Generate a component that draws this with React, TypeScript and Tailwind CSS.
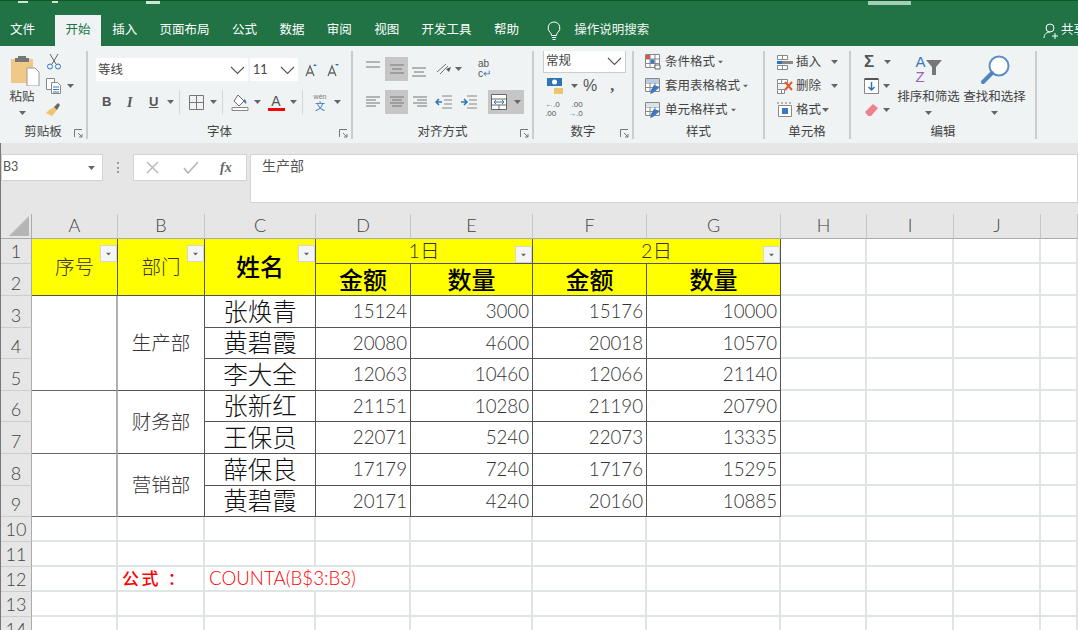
import React from 'react'

const Caret = ({ className = '' }: { className?: string }) => (
  <svg width="7" height="4" viewBox="0 0 7 4" className={`shrink-0 ${className}`}>
    <path d="M0 0h7L3.5 4z" fill="#666" />
  </svg>
)

const Chevron = () => (
  <svg width="15" height="9" viewBox="0 0 15 9">
    <path d="M1 1l6.5 6.5L14 1" fill="none" stroke="#555" strokeWidth="1.1" />
  </svg>
)

const Launcher = () => (
  <svg width="9" height="9" viewBox="0 0 9 9" className="absolute bottom-[1px] right-[3px]">
    <path d="M.5 8V.5H8M4 4l4 4M8 5v3H5" fill="none" stroke="#777" />
  </svg>
)

const Sep = () => <div className="mx-[5px] h-[24px] w-px bg-[#d3d6d6]" />

const Group = ({
  className,
  label,
  launcher,
  children,
}: {
  className: string
  label: string
  launcher?: boolean
  children: React.ReactNode
}) => (
  <div className={`relative flex h-[88px] shrink-0 flex-col border-r-2 border-[#c9cdcd] ${className}`}>
    <div className="h-[76px] overflow-hidden">{children}</div>
    <div className="text-center text-[12.5px] leading-[14px] text-[#444]">{label}</div>
    {launcher && <Launcher />}
  </div>
)

const AlignLines = ({ kind, active }: { kind: string; active?: boolean }) => {
  const lines: Record<string, string> = {
    top: 'M1 2h14M1 7h14',
    mid: 'M2 5h14M4 9h10M2 13h14',
    bottom: 'M1 8h14M3 12h10M1 16h14',
    left: 'M1 4h14M1 7h10M1 10h14M1 13h10',
    center: 'M2 4h14M4 7h10M2 10h14M4 13h10',
    right: 'M2 4h14M6 7h10M2 10h14M6 13h10',
  }
  return (
    <div className={`flex h-[24px] w-[23px] items-center justify-center ${active ? 'bg-[#c6c6c6]' : ''}`}>
      <svg width="18" height="18" viewBox="0 0 18 18">
        <path d={lines[kind]} stroke="#777" fill="none" />
      </svg>
    </div>
  )
}

const StyleIcon = ({ kind }: { kind: number }) => (
  <svg width="16" height="16" viewBox="0 0 16 16" className="shrink-0">
    <path d="M.5.5h14v13H.5zM.5 5h14M.5 9.500h14M5 .5v13M10 .5v13" fill="#fff" stroke="#888" />
    {kind === 0 && <path d="M1 1h4v4H1z" fill="#d9534f" />}
    {kind === 0 && <path d="M5.500 5.500h4v4h-4z" fill="#3a78c2" />}
    {kind === 0 && <path d="M10 11h5v4h-5z" fill="#fff" stroke="#666" />}
    {kind > 0 && <path d="M1 1h13v4H1z" fill={kind === 1 ? '#b8cde6' : '#dbe3ee'} />}
    {kind > 0 && <path d="M9 7l6 2-7 6-3 1 1-4z" fill="#3a78c2" />}
  </svg>
)

const CellIcon = ({ kind }: { kind: number }) => (
  <svg width="18" height="17" viewBox="0 0 18 17" className="shrink-0">
    {kind === 0 && (
      <>
        <path d="M1.500 1.500h10v4h-10zM1.500 11.500h10v4h-10zM6.500 1.500v4M6.500 11.500v4" fill="#fff" stroke="#888" />
        <path d="M2 8.500h15" stroke="#888" strokeWidth="3" />
        <path d="M1 8.500h5" stroke="#2f75b5" strokeWidth="3" />
      </>
    )}
    {kind === 1 && (
      <>
        <path d="M1.500 1.500h10v4h-10zM1.500 11.500h7v4h-7zM5.500 1.500v4M5.500 11.500v4M1.500 6v5" fill="#fff" stroke="#888" />
        <path d="M9 4l7 8M16 4l-7 8" stroke="#e0592a" strokeWidth="2" />
      </>
    )}
    {kind === 2 && (
      <>
        <path d="M2.500 3.500h13v11h-13z" fill="#fff" stroke="#888" />
        <path d="M1 1h16" stroke="#777" strokeDasharray="2 2" />
        <path d="M6 6h6v6H6z" fill="#3a78c2" />
      </>
    )}
  </svg>
)

const tabs = ['文件', '开始', '插入', '页面布局', '公式', '数据', '审阅', '视图', '开发工具', '帮助']

const TitleBar = () => (
  <div className="flex h-[46px] flex-col border-t border-[#0b5a23] bg-[#217346]">
    <div className="flex h-[4px] items-start">
      <div className="ml-[18px] h-[2px] w-[10px] bg-[#cfe3d8]" />
      <div className="ml-[24px] h-[2px] w-[6px] bg-[#cfe3d8]" />
      <div className="ml-[88px] h-[3px] w-[14px] bg-[#cfe3d8]" />
      <div className="ml-[708px] h-[4px] w-[43px] bg-[#a3cdb7]" />
    </div>
    <div className="flex h-[41px] items-end text-[12.5px] text-white">
      {tabs.map((t, i) => (
        <div
          key={t}
          className={
            i === 0
              ? 'flex h-[31px] items-center pl-[10px] pr-[20px]'
              : i === 1
                ? 'flex h-[31px] items-center bg-[#eff3f3] px-[10.500px] text-[#217346]'
                : 'flex h-[31px] items-center px-[11.200px]'
          }
        >
          {t}
        </div>
      ))}
      <div className="flex h-[31px] items-center pl-[16px]">
        <svg width="16" height="20" viewBox="0 0 16 20">
          <path d="M8 1a6 6 0 0 0-3.500 10.800c.8.700.9 1.500 1 2.700h5c.1-1.200.2-2 1-2.700A6 6 0 0 0 8 1zM5.800 16.500h4.400M6.500 18.500h3" fill="none" stroke="#fff" />
        </svg>
        <span className="ml-[12px] text-[#f0f5f2]">操作说明搜索</span>
      </div>
      <div className="ml-auto flex h-[31px] w-[36px] items-center overflow-hidden">
        <svg width="18" height="18" viewBox="0 0 18 18" className="shrink-0">
          <path d="M8 2a4 4 0 0 1 0 8 4 4 0 0 1 0-8zM2 16c0-4 3-6 6-6M13 11v6M10 14h6" fill="none" stroke="#fff" />
        </svg>
        <span className="ml-[1px] shrink-0">共享</span>
      </div>
    </div>
  </div>
)

const Clipboard = () => (
  <Group className="w-[88px]" label="剪贴板" launcher>
    <div className="flex">
      <div className="ml-[9px] flex w-[26px] flex-col items-center">
        <svg width="30" height="31" viewBox="0 0 30 31" className="ml-[6px] mt-[4px] shrink-0">
          <path d="M1 4h22v24H1z" fill="#f0c987" />
          <path d="M8 1h8v2h3v4H5V3h3z" fill="#777" />
          <path d="M17 13h8l4 4v14H17z" fill="#fff" stroke="#999" />
        </svg>
        <div className="mt-[3px] w-[30px] text-center text-[12.500px] leading-[16px] text-[#444]">粘贴</div>
        <Caret className="mt-[6px]" />
      </div>
      <div className="ml-[9px] flex flex-col">
        <svg width="16" height="17" viewBox="0 0 16 17" className="ml-[2px] mt-[2px]">
          <path d="M4 1l6 10M12 1L6 11" stroke="#666" fill="none" />
          <circle cx="4" cy="13.500" r="2.500" fill="none" stroke="#2f75b5" />
          <circle cx="12" cy="13.500" r="2.500" fill="none" stroke="#2f75b5" />
        </svg>
        <div className="mt-[7px] flex items-center">
          <svg width="17" height="17" viewBox="0 0 17 17" className="ml-[1px]">
            <path d="M1.500 1.500h8v11h-8z" fill="#fff" stroke="#888" />
            <path d="M6.500 5.500h6l3 3v8h-9z" fill="#fff" stroke="#888" />
            <path d="M8 10h6M8 12.500h6M8 15h6" stroke="#3a78c2" />
          </svg>
          <Caret className="ml-[5px]" />
        </div>
        <svg width="16" height="14" viewBox="0 0 16 14" className="ml-[1px] mt-[8px]">
          <path d="M9 5l3 3-5 6-6-3 3-3z" fill="#edc46f" />
          <path d="M9 5l4-4 2 2-3 5z" fill="#666" />
        </svg>
      </div>
    </div>
  </Group>
)

const FontGroup = () => (
  <Group className="w-[265px]" label="字体" launcher>
    <div className="flex items-center pl-[8px] pt-[7px]">
      <div className="flex h-[23px] w-[152px] items-center justify-between bg-white pl-[2px] pr-[3px] pt-[2px] text-[12.500px] text-[#444]">
        等线
        <Chevron />
      </div>
      <div className="ml-[2px] flex h-[23px] w-[48px] items-center justify-between bg-white pl-[3px] pr-[3px] pt-[1px] text-[12.500px] text-[#444]">
        11
        <Chevron />
      </div>
      <svg width="14" height="14" viewBox="0 0 14 14" className="ml-[6px]">
        <path d="M2 13L6 3l4 10M3.500 10h5" stroke="#666" strokeWidth="1.300" fill="none" />
        <path d="M9 3l2-2 2 2z" fill="#2f75b5" />
      </svg>
      <svg width="14" height="14" viewBox="0 0 14 14" className="ml-[8px]">
        <path d="M2 13L6 3l4 10M3.500 10h5" stroke="#666" strokeWidth="1.300" fill="none" />
        <path d="M9 1l2 2 2-2z" fill="#2f75b5" />
      </svg>
    </div>
    <div className="mt-[9px] flex h-[24px] items-center pl-[14px] text-[#555]">
      <span className="w-[25px] font-['Liberation_Sans'] text-[13px] font-bold">B</span>
      <span className="w-[22px] font-['Liberation_Serif'] text-[14px] font-bold italic">I</span>
      <span className="w-[18px] font-['Liberation_Sans'] text-[13px] font-bold underline">U</span>
      <Caret />
      <Sep />
      <svg width="15" height="15" viewBox="0 0 15 15" className="ml-[4px]">
        <path d="M.5.500h14v14H.5zM7.500.5v14M.5 7.500h14" fill="none" stroke="#777" />
      </svg>
      <Caret className="ml-[6px]" />
      <Sep />
      <svg width="18" height="18" viewBox="0 0 18 18" className="ml-[3px]">
        <path d="M7 2l6 6-5 5-5-5z" fill="#fff" stroke="#666" />
        <path d="M13 6c2 1 3 3 2 5l-2-2z" fill="#3a78c2" />
        <path d="M1 14.500h16v3H1z" fill="#fff" stroke="#888" />
      </svg>
      <Caret className="ml-[5px]" />
      <div className="ml-[6px] flex w-[18px] flex-col items-center">
        <span className="font-['Liberation_Sans'] text-[14px] leading-[14px]">A</span>
        <div className="h-[3px] w-[17px] bg-[#f00]" />
      </div>
      <Caret className="ml-[5px]" />
      <Sep />
      <div className="ml-[3px] flex w-[18px] flex-col items-center text-[#3a78c2]">
        <span className="font-['Liberation_Sans'] text-[7px] leading-[8px] text-[#777]">wén</span>
        <span className="text-[10px] leading-[11px]">文</span>
      </div>
      <Caret className="ml-[5px]" />
    </div>
  </Group>
)

const AlignGroup = () => (
  <Group className="w-[181px]" label="对齐方式" launcher>
    <div className="flex pl-[9px] pt-[6px]">
      <AlignLines kind="top" />
      <AlignLines kind="mid" active />
      <AlignLines kind="bottom" />
      <svg width="17" height="15" viewBox="0 0 17 15" className="ml-[4px] mt-[4px]">
        <path d="M2 11l9-8M5 13l8-8" stroke="#777" fill="none" />
        <path d="M11 8l5-2-2 5z" fill="#555" />
      </svg>
      <Caret className="ml-[3px] mt-[10px]" />
      <div className="ml-[16px] flex w-[20px] flex-col font-['Liberation_Sans'] text-[10px] leading-[10px] text-[#555]">
        <span className="mt-[2px]">ab</span>
        <span>
          c<span className="text-[#3a78c2]">↵</span>
        </span>
      </div>
    </div>
    <div className="mt-[9px] flex items-center pl-[9px]">
      <AlignLines kind="left" />
      <AlignLines kind="center" active />
      <AlignLines kind="right" />
      <svg width="17" height="15" viewBox="0 0 17 15" className="ml-[4px]">
        <path d="M7 1h10M9 5h8M9 9h8M7 13h10" stroke="#888" fill="none" />
        <path d="M7 7H1M4 4L1 7l3 3" stroke="#2f75b5" strokeWidth="1.500" fill="none" />
      </svg>
      <svg width="17" height="15" viewBox="0 0 17 15" className="ml-[8px]">
        <path d="M7 1h10M9 5h8M9 9h8M7 13h10" stroke="#888" fill="none" />
        <path d="M1 7h6M4 4l3 3-3 3" stroke="#2f75b5" strokeWidth="1.500" fill="none" />
      </svg>
      <div className="ml-[11px] flex h-[24px] w-[36px] items-center bg-[#c6c6c6] pl-[3px]">
        <svg width="16" height="16" viewBox="0 0 16 16">
          <path d="M.5.500h15v15H.5zM.5 5h15M.5 11h15M8 11v4" fill="#fff" stroke="#666" />
          <path d="M3 8h10M5 6L3 8l2 2M11 6l2 2-2 2" stroke="#2f75b5" fill="none" />
        </svg>
        <Caret className="ml-[7px]" />
      </div>
    </div>
  </Group>
)

const NumberGroup = () => (
  <Group className="w-[100px]" label="数字" launcher>
    <div className="ml-[9px] mt-[-2px] flex h-[24px] w-[83px] items-center justify-between border border-[#ccc] bg-white pl-[2px] pr-[3px] text-[12.500px] text-[#444]">
      常规
      <Chevron />
    </div>
    <div className="mt-[2px] flex h-[22px] items-center pl-[12px]">
      <svg width="19" height="19" viewBox="0 0 19 19">
        <path d="M1 1h15v8H1z" fill="#2f75b5" />
        <circle cx="8.500" cy="5" r="2.500" fill="#fff" />
        <path d="M8 11h9v6H8z" fill="#edc46f" />
      </svg>
      <Caret className="ml-[6px]" />
      <span className="ml-[5px] font-['Liberation_Sans'] text-[16px] text-[#555]">%</span>
      <span className="ml-[13px] font-['Liberation_Serif'] text-[16px] font-bold leading-[12px] text-[#555]">,</span>
    </div>
    <div className="mt-[3px] flex pl-[11px] font-['Liberation_Sans'] text-[8px] leading-[9px] text-[#555]">
      <div className="w-[23px]">
        <span className="text-[#2f75b5]">←</span>.0
        <br />
        .00
      </div>
      <div className="text-right">
        .00
        <br />
        <span className="text-[#2f75b5]">→</span>.0
      </div>
    </div>
  </Group>
)

const StylesGroup = () => (
  <Group className="w-[131px]" label="样式">
    <div className="flex flex-col gap-[6px] pl-[11px] pt-[2px] text-[12.500px] leading-[18px] text-[#444]">
      {['条件格式', '套用表格格式', '单元格样式'].map((t, i) => (
        <div key={t} className="flex items-center">
          <StyleIcon kind={i} />
          <span className="ml-[4px]">{t}</span>
          <Caret className="ml-[2px] scale-75" />
        </div>
      ))}
    </div>
  </Group>
)

const CellsGroup = () => (
  <Group className="w-[86px]" label="单元格">
    <div className="flex flex-col gap-[6px] pl-[11px] pt-[2px] text-[12.500px] leading-[18px] text-[#444]">
      {['插入', '删除', '格式'].map((t, i) => (
        <div key={t} className="flex items-center">
          <CellIcon kind={i} />
          <span className="ml-[2px] w-[25px]">{t}</span>
          <Caret className={i === 2 ? 'ml-[1px]' : 'ml-[10px]'} />
        </div>
      ))}
    </div>
  </Group>
)

const EditGroup = () => (
  <Group className="w-[186px]" label="编辑">
    <div className="flex">
      <div className="flex w-[43px] flex-col gap-[6px] pl-[13px] pt-[2px]">
        <div className="flex h-[18px] items-center">
          <span className="w-[17px] font-['Liberation_Sans'] text-[17px] font-bold leading-[18px] text-[#555]">Σ</span>
          <Caret className="ml-[3px]" />
        </div>
        <div className="flex h-[18px] items-center">
          <svg width="15" height="16" viewBox="0 0 15 16">
            <path d="M.5 1.500h14v14H.5z" fill="#fff" stroke="#888" />
            <path d="M.5 1h14" stroke="#555" strokeWidth="2" />
            <path d="M7.500 4v8M4.500 9l3 3 3-3" fill="none" stroke="#2f75b5" strokeWidth="1.500" />
          </svg>
          <Caret className="ml-[4px]" />
        </div>
        <div className="flex h-[18px] items-center">
          <svg width="15" height="14" viewBox="0 0 15 14">
            <path d="M1 9l8-8 5 4-7 8H4z" fill="#ec8290" />
          </svg>
          <Caret className="ml-[4px]" />
        </div>
      </div>
      <div className="ml-[2px] flex w-[65px] shrink-0 flex-col items-center">
        <div className="mt-[3px] flex h-[30px] items-center">
          <div className="flex flex-col font-['Liberation_Sans'] text-[15px] leading-[15px]">
            <span className="text-[#3a78c2]">A</span>
            <span className="text-[#9b5fc0]">Z</span>
          </div>
          <svg width="16" height="15" viewBox="0 0 16 15" className="mb-[3px]">
            <path d="M0 0h16l-6 7v8H6V7z" fill="#777" />
          </svg>
        </div>
        <div className="mt-[5px] whitespace-nowrap text-[12.500px] leading-[16px] text-[#444]">排序和筛选</div>
        <Caret className="mt-[6px]" />
      </div>
      <div className="ml-[1px] flex w-[65px] shrink-0 flex-col items-center">
        <svg width="30" height="30" viewBox="0 0 30 30" className="mt-[4px]">
          <circle cx="19" cy="11" r="9.500" fill="#fff" stroke="#5b8fc7" strokeWidth="2" />
          <path d="M12 18L3 27" stroke="#4f86c0" strokeWidth="4" strokeLinecap="round" />
        </svg>
        <div className="mt-[4px] whitespace-nowrap text-[12.500px] leading-[16px] text-[#444]">查找和选择</div>
        <Caret className="mt-[6px]" />
      </div>
    </div>
  </Group>
)

const Ribbon = () => (
  <div className="flex h-[97px] bg-[#eff3f3] pt-[5px]">
    <Clipboard />
    <FontGroup />
    <AlignGroup />
    <NumberGroup />
    <StylesGroup />
    <CellsGroup />
    <EditGroup />
  </div>
)

const FormulaBar = () => (
  <div className="flex h-[60px] bg-[#e6e6e6] pl-0 pt-[11px] pb-[10px]">
    <div className="flex h-[27px] w-[102px] items-center justify-between border border-[#d4d4d4] bg-white pl-[1px] pr-[7px] text-[12.500px] text-[#555]">
      B3
      <Caret />
    </div>
    <div className="ml-[14px] mt-[8px] flex h-[11px] w-[3px] flex-col justify-between">
      <div className="h-[2px] w-[2px] bg-[#999]" />
      <div className="h-[2px] w-[2px] bg-[#999]" />
      <div className="h-[2px] w-[2px] bg-[#999]" />
    </div>
    <div className="ml-[13px] flex h-[27px] w-[114px] items-center border border-[#d4d4d4] bg-white pl-[12px]">
      <svg width="13" height="13" viewBox="0 0 13 13">
        <path d="M1 1l11 11M12 1L1 12" stroke="#b5b5b5" strokeWidth="1.400" />
      </svg>
      <svg width="16" height="13" viewBox="0 0 16 13" className="ml-[24px]">
        <path d="M1 7l4 5L15 1" fill="none" stroke="#b5b5b5" strokeWidth="1.600" />
      </svg>
      <span className="ml-[21px] font-['Liberation_Serif'] text-[14px] font-bold italic text-[#666]">fx</span>
    </div>
    <div className="ml-[3px] h-[49px] flex-1 border border-[#d4d4d4] bg-white pl-[11px] pt-[1px] text-[14px] leading-[20px] text-[#555]">
      生产部
    </div>
  </div>
)

const Filter = () => (
  <div className="absolute bottom-0 right-0 flex h-[17px] w-[17px] items-center justify-center border border-[#d5d5d5] bg-[#f4f6f6]">
    <Caret className="scale-75" />
  </div>
)

const MergedFilter = () => (
  <div className="absolute right-0 top-[6px]">
    <div className="relative h-[17px] w-[17px]">
      <Filter />
    </div>
  </div>
)

const RowHead = ({ n }: { n: number }) => (
  <div className="flex items-end justify-center overflow-hidden border-b border-r border-b-[#cdcdcd] border-r-[#ababab] bg-[#e6e6e6] text-[18px] font-light leading-[24px] text-[#444]">
    {n}
  </div>
)

const Blank = () => <div className="border-b-2 border-r-2 border-[#dfe5e3]" />

const Blanks = () => (
  <>
    <Blank />
    <Blank />
    <Blank />
    <Blank />
  </>
)

const yellow = 'relative flex items-center justify-center border-b border-r border-[#555] bg-[#ffff00]'
const boldHead = `${yellow} text-[24px] font-medium leading-none text-black`
const thinHead = `${yellow} text-[19.500px] font-light text-[#333]`
const name = 'flex items-center justify-center border-b border-r border-[#555] pt-[1px] text-[24.500px] font-light leading-none text-[#111]'
const num = 'flex items-center justify-end border-b border-r border-[#555] pr-[3px] text-[18.700px] font-light leading-none text-[#333]'

type Row = { n: number; name: string; v: number[] }
type Block = { span: string; dept: string; rows: Row[] }

const blocks: Block[] = [
  {
    span: 'row-span-3',
    dept: '生产部',
    rows: [
      { n: 3, name: '张焕青', v: [15124, 3000, 15176, 10000] },
      { n: 4, name: '黄碧霞', v: [20080, 4600, 20018, 10570] },
      { n: 5, name: '李大全', v: [12063, 10460, 12066, 21140] },
    ],
  },
  {
    span: 'row-span-2',
    dept: '财务部',
    rows: [
      { n: 6, name: '张新红', v: [21151, 10280, 21190, 20790] },
      { n: 7, name: '王保员', v: [22071, 5240, 22073, 13335] },
    ],
  },
  {
    span: 'row-span-2',
    dept: '营销部',
    rows: [
      { n: 8, name: '薛保良', v: [17179, 7240, 17176, 15295] },
      { n: 9, name: '黄碧霞', v: [20171, 4240, 20160, 10885] },
    ],
  },
]

const EmptyRow = ({ n, children }: { n: number; children?: React.ReactNode }) => (
  <>
    <RowHead n={n} />
    {children ?? (
      <>
        <Blank />
        <Blank />
        <Blank />
      </>
    )}
    <Blanks />
    <Blanks />
  </>
)

const Sheet = () => (
  <div className="grid h-[416px] grid-cols-[31px_86px_87px_111px_95px_122px_114px_134px_86px_87px_87px_1fr] grid-rows-[25px_25px_32px_32px_31px_32px_31px_32px_32px_31px_25px_25px_25px_25px_25px] overflow-hidden bg-white">
    <div className="flex items-end justify-end border-b border-r border-[#ababab] bg-[#e6e6e6] pb-[2px] pr-[2px]">
      <svg width="20" height="20" viewBox="0 0 20 20">
        <path d="M20 0v20H0z" fill="#b5b5b5" />
      </svg>
    </div>
    {['A', 'B', 'C', 'D', 'E', 'F', 'G', 'H', 'I', 'J', ''].map((c, i) => (
      <div
        key={i}
        className="flex items-center justify-center border-b border-r border-b-[#ababab] border-r-[#c6c6c6] bg-[#e6e6e6] pb-[2px] text-[18px] font-light text-[#444]"
      >
        {c}
      </div>
    ))}

    <RowHead n={1} />
    <div className={`${thinHead} row-span-2`}>
      序号
      <MergedFilter />
    </div>
    <div className={`${thinHead} row-span-2`}>
      部门
      <MergedFilter />
    </div>
    <div className={`${boldHead} row-span-2`}>
      姓名
      <MergedFilter />
    </div>
    <div className={`${thinHead} col-span-2`}>
      1日
      <Filter />
    </div>
    <div className={`${thinHead} col-span-2`}>
      2日
      <Filter />
    </div>
    <Blanks />

    <RowHead n={2} />
    {['金额', '数量', '金额', '数量'].map((t, i) => (
      <div key={i} className={boldHead}>
        {t}
      </div>
    ))}
    <Blanks />

    {blocks.map((b) =>
      b.rows.map((r, ri) => (
        <React.Fragment key={r.n}>
          <RowHead n={r.n} />
          {ri === 0 && <div className={`${b.span} border-b border-r-2 border-b-[#666] border-r-[#b0b0b0]`} />}
          {ri === 0 && (
            <div
              className={`${b.span} flex items-center justify-center border-b border-r border-[#555] text-[19.500px] font-light text-[#333]`}
            >
              {b.dept}
            </div>
          )}
          <div className={name}>{r.name}</div>
          {r.v.map((v, i) => (
            <div key={i} className={num}>
              {v}
            </div>
          ))}
          <Blanks />
        </React.Fragment>
      )),
    )}

    <EmptyRow n={10} />
    <EmptyRow n={11} />
    <EmptyRow n={12}>
      <>
        <Blank />
        <div className="flex items-center whitespace-pre border-b-2 border-r-2 border-[#dfe5e3] pl-[4px] text-[17px] font-medium tracking-[2.500px] text-[#f00]">
          公式 ：
        </div>
        <div className="flex items-center whitespace-nowrap border-b-2 border-[#dfe5e3] pl-[4px] text-[18.700px] font-light text-[#f00]">
          COUNTA(B$3:B3)
        </div>
      </>
    </EmptyRow>
    <EmptyRow n={13} />
    <EmptyRow n={14} />
  </div>
)

export default function App() {
  return (
    <div className="h-[630px] w-[1078px] overflow-hidden bg-white font-['Lato','Noto_Sans_CJK_SC',sans-serif]">
      <TitleBar />
      <Ribbon />
      <div className="border-l border-[#777]">
        <FormulaBar />
        <div className="h-[11px] bg-[#e6e6e6]" />
        <Sheet />
      </div>
    </div>
  )
}
